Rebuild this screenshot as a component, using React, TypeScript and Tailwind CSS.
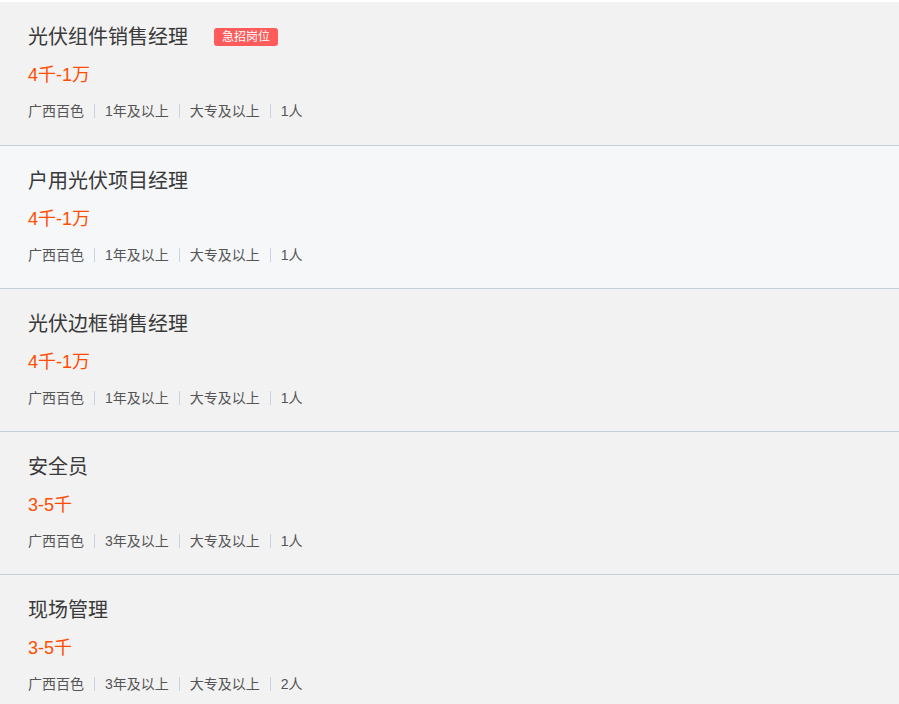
const JOBS: {
  title: string;
  urgent?: boolean;
  salary: string;
  city: string;
  exp: string;
  edu: string;
  count: string;
  active?: boolean;
}[] = [
  { title: '光伏组件销售经理', urgent: true, salary: '4千-1万', city: '广西百色', exp: '1年及以上', edu: '大专及以上', count: '1人' },
  { title: '户用光伏项目经理', salary: '4千-1万', city: '广西百色', exp: '1年及以上', edu: '大专及以上', count: '1人', active: true },
  { title: '光伏边框销售经理', salary: '4千-1万', city: '广西百色', exp: '1年及以上', edu: '大专及以上', count: '1人' },
  { title: '安全员', salary: '3-5千', city: '广西百色', exp: '3年及以上', edu: '大专及以上', count: '1人' },
  { title: '现场管理', salary: '3-5千', city: '广西百色', exp: '3年及以上', edu: '大专及以上', count: '2人' },
];

export default function App() {
  return (
    <main
      className="min-h-screen bg-white pt-[2px]"
      style={{ fontFamily: '"Liberation Sans", "Noto Sans CJK SC", sans-serif' }}
    >
      <ul>
        {JOBS.map((job, i) => (
          <li
            key={job.title}
            className={`${i === 0 ? 'h-[144px]' : 'h-[143px]'} border-b border-[#c3cfdc] pl-[28px] pt-[23px] ${
              job.active ? 'bg-[#f6f7f9]' : 'bg-[#f2f2f2]'
            }`}
          >
            {/* Title */}
            <div className="flex items-center h-[24px]">
              <h3 className="text-[20px] leading-[24px] text-[#3a3a3a]">{job.title}</h3>
              {job.urgent && (
                <span className="ml-[26px] h-[18px] px-[8px] rounded-[3px] bg-[#ff5b5b] text-white text-[12px] leading-[18px]">
                  急招岗位
                </span>
              )}
            </div>

            {/* Salary */}
            <p className="mt-[14px] text-[18px] leading-[24px] text-[#ff4d00]">{job.salary}</p>

            {/* Meta */}
            <div className="mt-[14px] flex items-center text-[14px] leading-[20px] text-[#555]">
              <span className="pr-[10px]">{job.city}</span>
              <span className="px-[10px] border-l border-[#c9d3de] leading-[14px]">{job.exp}</span>
              <span className="px-[10px] border-l border-[#c9d3de] leading-[14px]">{job.edu}</span>
              <span className="px-[10px] border-l border-[#c9d3de] leading-[14px]">{job.count}</span>
            </div>
          </li>
        ))}
      </ul>
    </main>
  );
}
